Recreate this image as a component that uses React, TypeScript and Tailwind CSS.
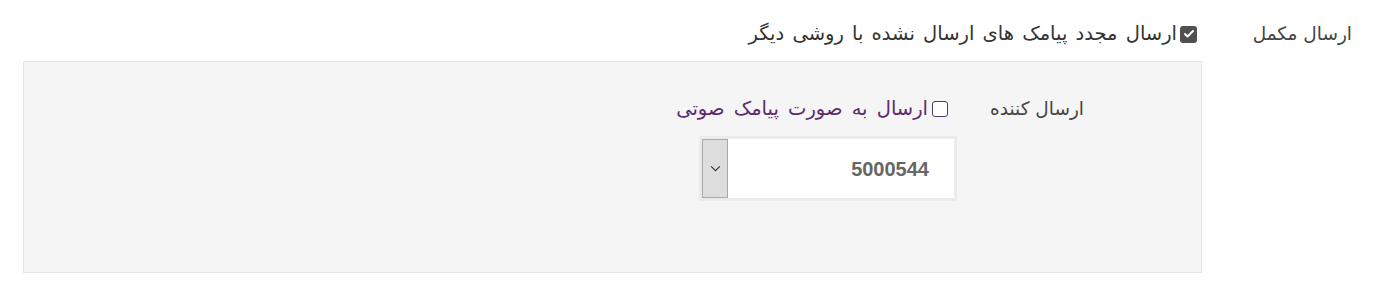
import { Check } from "lucide-react";

// Farsi settings row: "full send" option with a sender panel below it
export default function App() {
  return (
    <div
      dir="rtl"
      className="w-[1386px] h-[290px] bg-white text-[#333] font-['DejaVu_Sans',sans-serif]"
    >
      {/* row: resend option */}
      <div className="flex items-start pt-[21px]">
        <div className="w-[184px] shrink-0 pr-[34px] text-[18.5px] leading-[26px] text-[#444]">
          ارسال مکمل
        </div>
        <div className="flex-1 pl-[23px]">
          <label className="flex items-center gap-[3px] pr-[5px] text-[19.5px] leading-[26px] [word-spacing:2px] text-[#333]">
            <span className="flex h-[17px] w-[17px] items-center justify-center rounded-[3px] bg-[#505050]">
              <Check className="h-[12px] w-[12px] text-white" strokeWidth={4} />
            </span>
            ارسال مجدد پیامک های ارسال نشده با روشی دیگر
          </label>

          {/* sender panel */}
          <div className="mt-[14px] h-[212px] border border-[#e6e6e6] bg-[#f5f5f5]">
            <div className="flex pt-[34px]">
              <div className="w-[244px] shrink-0 pr-[117px] text-[18.5px] leading-[26px] text-[#444]">
                ارسال کننده
              </div>
              <div className="flex flex-col items-start">
                <label className="flex items-center gap-[4px] pr-[9px] text-[19.5px] leading-[26px] [word-spacing:3px] text-[#5b2a6e]">
                  <span className="h-[16px] w-[16px] rounded-[3px] border-[1.5px] border-[#4e3a6e] bg-white" />
                  ارسال به صورت پیامک صوتی
                </label>
                <div className="mt-[14px] flex h-[65px] w-[258px] border-[3px] border-[#ebebeb] bg-white">
                  <div className="flex flex-1 items-center pr-[25px] font-['Liberation_Sans',sans-serif] text-[20px] font-bold text-[#666]">
                    5000544
                  </div>
                  <div className="flex w-[26px] items-center justify-center border border-[#a8a8a8] bg-[#dddddd]">
                    <svg viewBox="0 0 12 8" className="h-[7px] w-[11px]" fill="none">
                      <path d="M1 1.5 L6 6.5 L11 1.5" stroke="#3a3a3a" strokeWidth="1.4" />
                    </svg>
                  </div>
                </div>
              </div>
            </div>
          </div>
        </div>
      </div>
    </div>
  );
}
